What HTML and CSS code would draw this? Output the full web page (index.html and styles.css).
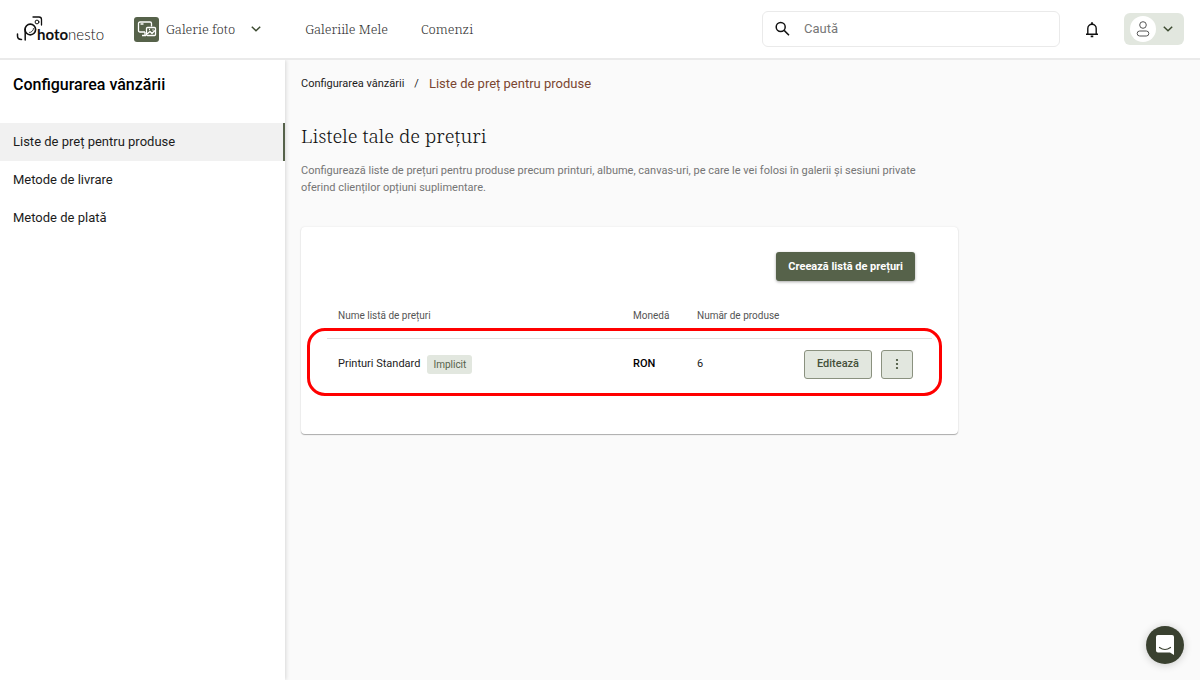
FILE: index.html
```html
<!DOCTYPE html>
<html lang="ro">
<head>
<meta charset="utf-8">
<meta name="viewport" content="width=device-width, initial-scale=1">
<title>Photonesto – Liste de preț pentru produse</title>
<link rel="stylesheet" href="styles.css">
</head>
<body>
<header class="topbar">
  <a class="logo" href="#" aria-label="Photonesto">
    <svg class="logo-mark" width="28" height="28" viewBox="0 0 28 28" fill="none" stroke="#111" stroke-linecap="round">
      <path d="M1.500 19v2q0 3.500 4 3.500M9.200 25v-11" stroke-width="1.500"/>
      <circle cx="14.300" cy="14.500" r="5.300" stroke-width="1.700"/>
      <path d="M17.500 13.500a4 4 0 0 1-4 4" stroke-width=".8"/>
      <circle cx="21" cy="7" r="1.900" stroke-width="1"/>
      <path d="M17 2h6q2.500 0 2.500 2.500v5.500" stroke-width="1.300"/>
    </svg>
    <span class="logo-text"><b>hoto</b>nesto</span>
  </a>
  <button class="app-switch" type="button">
    <span class="app-icon">
      <svg width="20" height="18" viewBox="0 0 20 18" fill="none" stroke="#fff" stroke-width="1.300" stroke-linejoin="round">
        <path d="M8 12H3q-1.500 0-1.500-1.500v-7Q1.500 2 3 2h10q1.500 0 1.500 1.500v3M3.500 4h3M8 12v3M5 15.500h4"/>
        <rect x="9.500" y="7.500" width="9" height="8" rx="1"/>
        <path d="M10 14l3-2.500 2 2 3-3M12 9.500h1M15.500 10h1"/>
      </svg>
    </span>
    <span>Galerie foto</span>
    <svg class="chev" width="10" height="6" viewBox="0 0 10 6" fill="none" stroke="#3c4a30" stroke-width="1.500"><path d="M.8.8 5 4.800 9.200.8"/></svg>
  </button>
  <nav class="topnav" aria-label="Principal">
    <a href="#">Galeriile Mele</a>
    <a href="#">Comenzi</a>
  </nav>
  <label class="search">
    <svg width="16" height="16" viewBox="0 0 16 16" fill="none" stroke="#111" stroke-width="1.500"><circle cx="5.700" cy="6" r="4.500"/><path d="M9.100 9.400l4.900 4.900"/></svg>
    <input type="search" placeholder="Caută" aria-label="Caută">
  </label>
  <button class="bell" type="button" aria-label="Notificări">
    <svg width="14" height="17" viewBox="0 0 14 17" fill="none" stroke="#111" stroke-width="1.400"><path d="M1 13.300h12M2.800 13V7.500a4.200 4.200 0 0 1 8.400 0V13"/><path d="M7 3V1.200M5.700 15.300h2.600" stroke-width="1.800"/></svg>
  </button>
  <button class="account" type="button" aria-label="Cont">
    <span class="avatar">
      <svg width="14" height="16" viewBox="0 0 14 16" fill="none" stroke="#555" stroke-width="1"><circle cx="7" cy="4" r="3.300"/><rect x="1.200" y="10" width="11.600" height="5" rx="2.500"/></svg>
    </span>
    <svg width="10" height="6" viewBox="0 0 10 6" fill="none" stroke="#3c4a30" stroke-width="1.500"><path d="M.8.8 5 4.800 9.200.8"/></svg>
  </button>
</header>
<div class="layout">
  <aside class="sidebar">
    <h2 class="side-title">Configurarea vânzării</h2>
    <nav class="side-nav" aria-label="Configurare">
      <a class="active" href="#" aria-current="page">Liste de preț pentru produse</a>
      <a href="#">Metode de livrare</a>
      <a href="#">Metode de plată</a>
    </nav>
  </aside>
  <main class="content">
    <nav class="crumbs" aria-label="Breadcrumb">
      <a href="#">Configurarea vânzării</a><span>/</span><a class="current" href="#">Liste de preț pentru produse</a>
    </nav>
    <h1 class="title">Listele tale de prețuri</h1>
    <p class="intro">Configurează liste de prețuri pentru produse precum printuri, albume, canvas-uri, pe care le vei folosi în galerii și sesiuni private oferind clienților opțiuni suplimentare.</p>
    <section class="card">
      <div class="card-actions"><button class="primary" type="button">Creează listă de prețuri</button></div>
      <div class="table-wrap">
        <table class="prices">
          <thead>
            <tr><th class="col-name">Nume listă de prețuri</th><th class="col-currency">Monedă</th><th>Număr de produse</th><th class="col-actions"></th></tr>
          </thead>
          <tbody>
            <tr>
              <td><div class="name">Printuri Standard<span class="tag">Implicit</span></div></td>
              <td class="currency">RON</td>
              <td>6</td>
              <td><div class="row-actions">
                <button class="edit" type="button">Editează</button>
                <button class="more" type="button" aria-label="Mai multe"><svg width="4" height="12" viewBox="0 0 4 12" fill="#3c4a30"><circle cx="2" cy="2" r="1.100"/><circle cx="2" cy="6" r="1.100"/><circle cx="2" cy="10" r="1.100"/></svg></button>
              </div></td>
            </tr>
          </tbody>
        </table>
        <div class="highlight"></div>
      </div>
    </section>
  </main>
</div>
<button class="chat" type="button" aria-label="Chat">
  <svg width="18" height="20" viewBox="0 0 18 20"><path d="M2 0h14q2 0 2 2v18l-4-2.500H2q-2 0-2-2V2Q0 0 2 0z" fill="#fff"/><path d="M3.500 12.500q5.500 4 11 0" fill="none" stroke="#3a4130" stroke-width="1.200" stroke-linecap="round"/></svg>
</button>
</body>
</html>
```

FILE: styles.css
```css
* { box-sizing: border-box; }
body {
  margin: 0;
  min-height: 100vh;
  display: flex;
  flex-direction: column;
  background: #fafafa;
  color: #1c1c1c;
  font: 13px/16px Roboto, "Liberation Sans", sans-serif;
}
a { color: inherit; text-decoration: none; }
button { font: inherit; border: 0; padding: 0; cursor: pointer; }
svg { display: block; flex: none; }

.topbar {
  display: flex;
  align-items: center;
  height: 60px;
  padding: 0 16px;
  background: #fff;
  border-bottom: 2px solid #eaeaea;
}
.logo { display: flex; align-items: flex-end; width: 118px; height: 28px; color: #111; }
.logo-mark { margin-right: -7px; }
.logo-text { padding-bottom: 1px; font: 300 15px/16px Lato, sans-serif; }
.logo-text b { font-weight: 700; }
.app-switch, .topnav { font: 300 13px/20px "Noto Serif", "Liberation Serif", serif; color: #333; }
.app-switch { display: flex; align-items: center; gap: 7px; background: none; }
.app-icon {
  display: grid;
  place-items: center;
  width: 25px;
  height: 25px;
  border-radius: 3px;
  background: #56624a;
}
.chev { margin-left: 9px; }
.topnav { display: flex; gap: 33px; margin-left: 44px; }
.search {
  display: flex;
  align-items: center;
  gap: 13px;
  width: 298px;
  height: 36px;
  margin-left: auto;
  padding: 0 12px;
  border: 1px solid #eaeaea;
  border-radius: 6px;
}
.search input {
  flex: 1;
  min-width: 0;
  border: 0;
  padding: 0;
  outline: 0;
  background: none;
  font: inherit;
}
.search input::placeholder { color: #777; opacity: 1; }
.bell { margin: 0 25px; background: none; }
.account {
  display: flex;
  align-items: center;
  gap: 7px;
  width: 60px;
  height: 32px;
  padding-left: 6px;
  border-radius: 6px;
  background: #e2e7df;
}
.avatar {
  display: grid;
  place-items: center;
  width: 26px;
  height: 26px;
  border-radius: 50%;
  background: #fff;
}

.layout { flex: 1; display: flex; }
.sidebar {
  flex: none;
  width: 285px;
  background: #fff;
  box-shadow: 1px 0 4px rgba(0, 0, 0, .14);
  clip-path: inset(0 -16px 0 0);
}
.side-title { margin: 14px 13px 28px; font-size: 16px; line-height: 21px; font-weight: 500; color: #000; }
.side-nav { display: flex; flex-direction: column; }
.side-nav a { padding: 11px 13px; border-right: 2px solid transparent; }
.side-nav .active { background: #f1f1f1; border-right-color: #56624a; }

.content { flex: 1; min-width: 0; padding: 16px; }
.crumbs { display: flex; align-items: center; gap: 10px; font-size: 11px; }
.crumbs .current { font-size: 13px; color: #7b4631; }
.title {
  margin: 30px 0 12px;
  font: 300 19px/28px "Noto Serif", "Liberation Serif", serif;
  color: #111;
}
.intro { max-width: 640px; margin: 0; font-size: 11px; line-height: 17px; color: #757575; }
.card {
  max-width: 657px;
  margin-top: 31px;
  padding: 25px 26px 44px;
  border-radius: 4px;
  background: #fff;
  box-shadow: 0 1px 1px rgba(0, 0, 0, .3), 0 0 2px rgba(0, 0, 0, .1);
}
.card-actions { display: flex; justify-content: flex-end; padding-right: 17px; }
.primary {
  height: 29px;
  padding: 0 12px;
  border-radius: 3px;
  background: #56624a;
  color: #fff;
  font-size: 11px;
  font-weight: 700;
  box-shadow: 0 1px 3px rgba(0, 0, 0, .35);
}
.table-wrap { position: relative; margin-top: 13px; }
.prices { width: 100%; border-collapse: collapse; font-size: 11px; }
.prices th {
  height: 44px;
  padding: 0 11px;
  border-bottom: 1px solid #e0e0e0;
  font-size: 10px;
  font-weight: 400;
  text-align: left;
  color: #555;
}
.prices td { height: 52px; padding: 0 11px; }
.col-name { width: 295px; }
.col-currency { width: 64px; }
.prices .currency { font-weight: 500; color: #000; }
.name { display: flex; align-items: center; gap: 7px; }
.tag {
  padding: 2px 6px;
  border-radius: 3px;
  background: #e2e7df;
  color: #56624a;
  font-size: 10px;
  line-height: 15px;
}
.row-actions { display: flex; justify-content: flex-end; gap: 9px; padding-right: 8px; }
.edit, .more {
  display: grid;
  place-items: center;
  height: 29px;
  border: 1px solid #8a917f;
  border-radius: 3px;
  background: #e2e7df;
  color: #45503a;
}
.edit { width: 68px; font-size: 11px; font-weight: 500; }
.more { width: 32px; }
.highlight {
  position: absolute;
  inset: 34px -10px -6px -20px;
  border: 3px solid #f00;
  border-radius: 18px;
  pointer-events: none;
}
.chat {
  position: fixed;
  right: 16px;
  bottom: 16px;
  display: grid;
  place-items: center;
  width: 38px;
  height: 38px;
  border-radius: 50%;
  background: #3a4130;
  box-shadow: 0 1px 8px rgba(0, 0, 0, .2);
}
```
